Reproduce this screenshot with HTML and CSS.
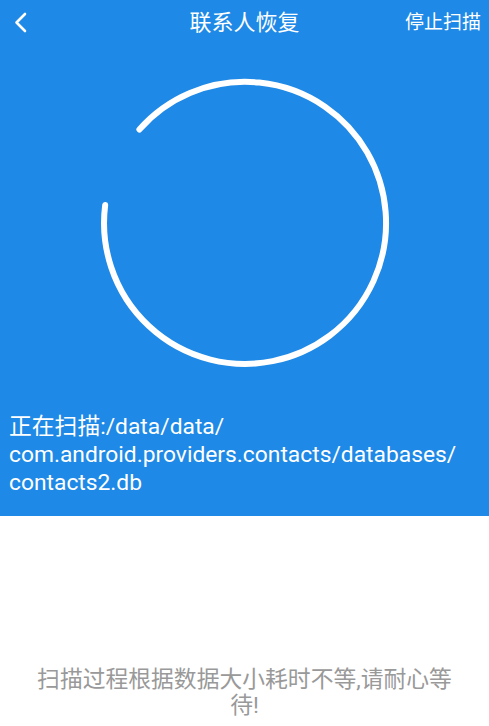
FILE: index.html
```html
<!DOCTYPE html>
<html lang="zh">
<head>
<meta charset="utf-8">
<link rel="stylesheet" href="styles.css">
</head>
<body>
<div class="blue">
  <div class="header">
    <div class="back">
      <svg width="20" height="24" viewBox="0 0 20 24"><path d="M12 3 L3.5 11.5 L12 20" fill="none" stroke="#fff" stroke-width="2.6" stroke-linecap="round" stroke-linejoin="round"/></svg>
    </div>
    <div class="title">联系人恢复</div>
    <div class="stop">停止扫描</div>
  </div>
  <div class="ring">
    <svg width="300" height="300" viewBox="0 0 300 300"><path d="M44.4 56.5 A141 141 0 1 1 10.2 131.9" fill="none" stroke="#fff" stroke-width="6" stroke-linecap="round"/></svg>
  </div>
  <div class="path">正在扫描:/data/data/<br>com.android.providers.contacts/databases/<br>contacts2.db</div>
</div>
<div class="tip">扫描过程根据数据大小耗时不等,请耐心等待!</div>
</body>
</html>
```
FILE: styles.css
```css
html, body { margin: 0; padding: 0; background: #fff; }
body { font-family: Roboto, "Noto Sans CJK SC", sans-serif; width: 489px; }
.blue { background: #1e89e6; height: 516px; display: flex; flex-direction: column; }
.header { height: 40px; padding-bottom: 5px; display: grid; grid-template-columns: 1fr auto 1fr; align-items: center; color: #fff; }
.back { padding-left: 13px; display: flex; align-items: center; padding-top: 6px; }
.title { font-size: 22px; }
.stop { justify-self: end; font-size: 19px; padding-right: 8px; }
.ring { display: flex; justify-content: center; margin-top: 28px; }
.ring svg { display: block; }
.path { color: #fff; font-size: 22.8px; line-height: 28px; padding: 40px 9px 0; }
.tip { color: #999; font-size: 22.8px; line-height: 26px; text-align: center; padding: 151px 30px 0; }
```
